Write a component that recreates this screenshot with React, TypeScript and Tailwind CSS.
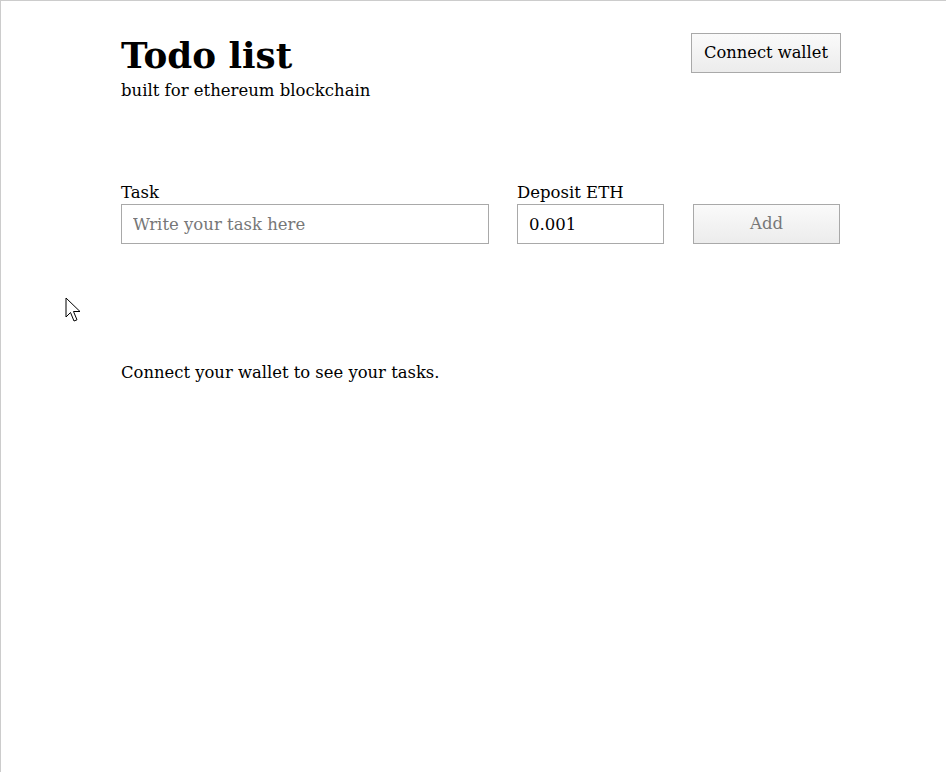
export default function App() {
  return (
    <div className="relative h-[772px] w-[946px] overflow-hidden border-l border-t border-[#cccccc] bg-white font-['DejaVu_Serif',serif] text-black">
      <div className="ml-[120px] w-[720px] pt-[30px]">
        {/* Header */}
        <div className="flex items-start justify-between">
          <div>
            <h1 className="text-[35.7px] font-bold leading-[48px]">Todo list</h1>
            <p className="mt-[1px] text-[16.5px] leading-[22px]">built for ethereum blockchain</p>
          </div>
          <button
            type="button"
            className="mt-[2px] h-[40px] w-[150px] border border-[#a9a9a9] bg-gradient-to-b from-[#fafafa] to-[#ececec] text-[16.3px]"
          >
            Connect wallet
          </button>
        </div>

        {/* New task form */}
        <div className="mt-[79px] flex items-end gap-[28px]">
          <label className="flex w-[368px] flex-col">
            <span className="text-[16.5px] leading-[23px]">Task</span>
            <input
              className="h-[40px] border border-[#a9a9a9] px-[11px] text-[16.5px] outline-none placeholder:text-[#777]"
              placeholder="Write your task here"
            />
          </label>
          <label className="flex w-[147px] flex-col">
            <span className="text-[16.5px] leading-[23px]">Deposit ETH</span>
            <input
              className="h-[40px] border border-[#a9a9a9] px-[11px] text-[16.5px] outline-none"
              defaultValue="0.001"
            />
          </label>
          <button
            type="button"
            className="ml-[1px] h-[40px] w-[147px] border border-[#a9a9a9] bg-gradient-to-b from-[#fafafa] to-[#ececec] text-[16.5px] text-[#777]"
          >
            Add
          </button>
        </div>

        <p className="mt-[118px] text-[16.4px] leading-[22px]">Connect your wallet to see your tasks.</p>
      </div>

      {/* mouse pointer */}
      <svg className="absolute left-[64px] top-[296px]" width="20" height="28" viewBox="0 0 20 28">
        <path
          d="M1 1 L1 20 L5.5 15.5 L9 24 L12 22.8 L8.5 14.5 L15 14.5 Z"
          fill="white"
          stroke="black"
          strokeWidth="1"
          strokeLinejoin="miter"
        />
      </svg>
    </div>
  );
}
